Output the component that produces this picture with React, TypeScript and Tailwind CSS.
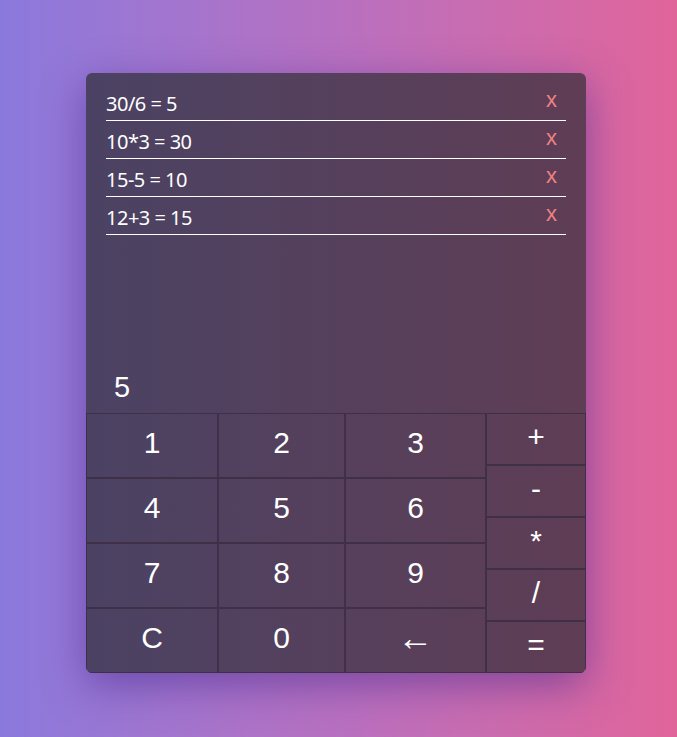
const history = [
  { expr: "30/6 = 5" },
  { expr: "10*3 = 30" },
  { expr: "15-5 = 10" },
  { expr: "12+3 = 15" },
];

const numRows = [
  ["1", "2", "3"],
  ["4", "5", "6"],
  ["7", "8", "9"],
  ["C", "0", "←"],
];

const ops = ["+", "-", "*", "/", "="];

const btn =
  "flex items-center justify-center border border-[#3f3048] text-white text-[30px] leading-none pb-[5px]";

export default function App() {
  return (
    <div
      className="min-h-screen w-full flex items-start justify-start pl-[86px] pt-[73px] bg-gradient-to-r from-[#8a79dd] via-[#b870c0] to-[#e0649a]"
      style={{ fontFamily: '"Liberation Sans", Arial, sans-serif' }}
    >
      <div className="w-[500px] h-[600px] flex flex-col rounded-md overflow-hidden bg-gradient-to-r from-[#4b4263] to-[#5f3d55] shadow-[0_12px_40px_rgba(70,40,140,0.55)]">
        {/* history list */}
        <ul className="flex-1 px-5 pt-[10px]">
          {history.map((h) => (
            <li
              key={h.expr}
              className="h-[38px] flex items-center justify-between border-b border-white"
            >
              <span
                className="text-white text-[20px] pt-[4px] tracking-[-0.5px]"
                style={{ fontFamily: '"Noto Sans", sans-serif' }}
              >
                {h.expr}
              </span>
              <span className="text-[#f08282] text-[22px] leading-none mr-[9px] pb-[4px]">
                x
              </span>
            </li>
          ))}
        </ul>

        {/* display */}
        <div className="h-[42px] pl-[28px] pb-[10px] text-white text-[29px] leading-none flex items-center">
          5
        </div>

        {/* keypad */}
        <div className="flex h-[260px]">
          <div className="grid grid-cols-[132px_127px_141px] grid-rows-4">
            {numRows.flat().map((k) => (
              <button key={k} className={btn}>
                {k === "←" ? <span className="text-[36px]">←</span> : k}
              </button>
            ))}
          </div>
          <div className="w-[100px] grid grid-rows-5">
            {ops.map((o) => (
              <button key={o} className={btn}>
                {o}
              </button>
            ))}
          </div>
        </div>
      </div>
    </div>
  );
}
